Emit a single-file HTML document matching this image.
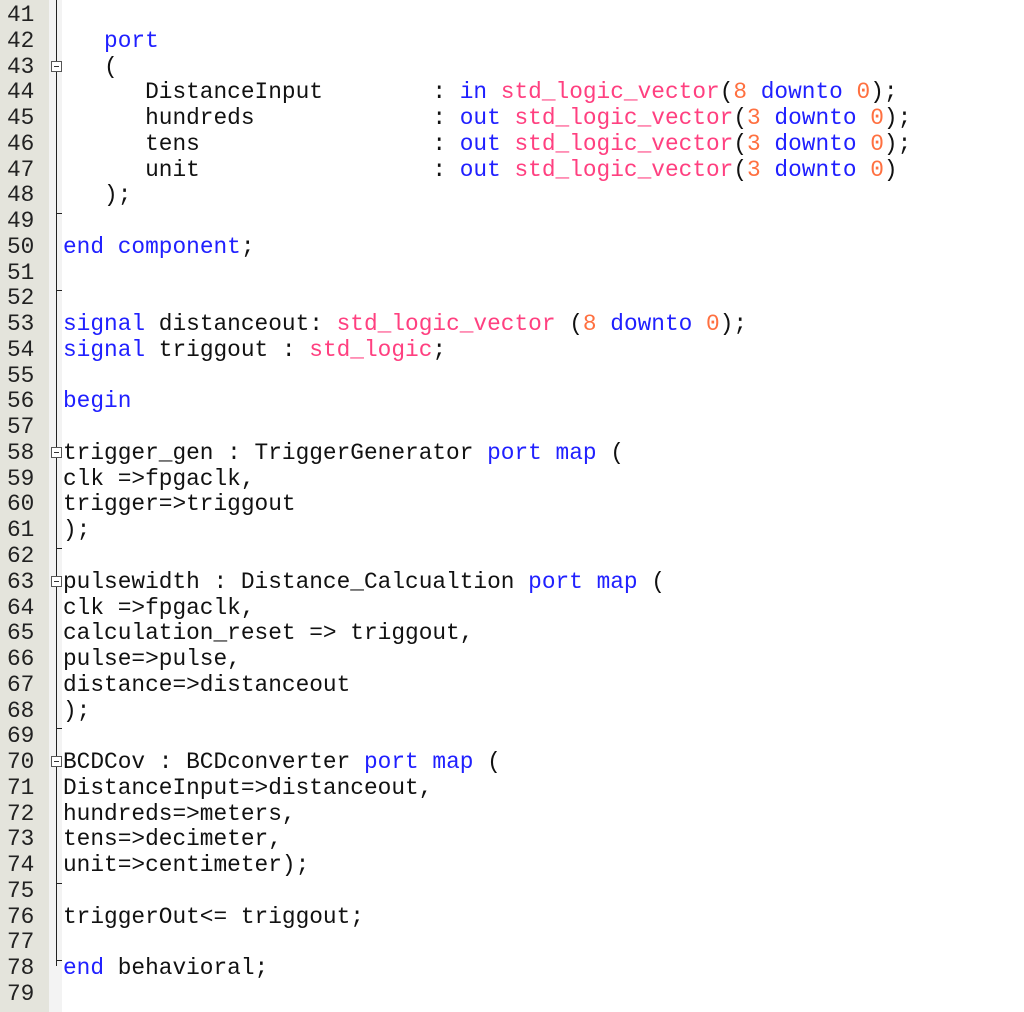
<!DOCTYPE html>
<html><head><meta charset="utf-8"><style>
html,body{margin:0;padding:0;background:#fff;width:1024px;height:1012px;overflow:hidden;position:relative}
.g{position:absolute;left:0;top:0;width:49px;height:1012px;background:#e4e4dc}
.f{position:absolute;left:49px;top:0;width:13px;height:1012px;background:#f3f3f3}
.vl{position:absolute;left:56px;top:0;width:1px;height:966px;background:#222}
.tk{position:absolute;left:56px;width:6px;height:1px;background:#222}
.bx{position:absolute;left:51px;width:11px;height:11px;border:1px solid #555;background:#fff;box-sizing:border-box}
.bx:after{content:"";position:absolute;left:2px;top:4px;width:5px;height:1px;background:#333}
.n,.c{position:absolute;font-family:"Liberation Mono","Courier New",monospace;font-size:22.8px;line-height:25.76px;white-space:pre;color:#111}
.n{left:7px;color:#222}
.c{left:63px}
.k{color:#2020ff}.t{color:#ff4080}.d{color:#ff7040}
</style></head><body>
<div class="g"></div><div class="f"></div><div class="vl"></div>
<div id="w"></div>
<script>
var L=[
"",
"   <span class=k>port</span>",
"   (",
"      DistanceInput        : <span class=k>in</span> <span class=t>std_logic_vector</span>(<span class=d>8</span> <span class=k>downto</span> <span class=d>0</span>);",
"      hundreds             : <span class=k>out</span> <span class=t>std_logic_vector</span>(<span class=d>3</span> <span class=k>downto</span> <span class=d>0</span>);",
"      tens                 : <span class=k>out</span> <span class=t>std_logic_vector</span>(<span class=d>3</span> <span class=k>downto</span> <span class=d>0</span>);",
"      unit                 : <span class=k>out</span> <span class=t>std_logic_vector</span>(<span class=d>3</span> <span class=k>downto</span> <span class=d>0</span>)",
"   );",
"",
"<span class=k>end</span> <span class=k>component</span>;",
"",
"",
"<span class=k>signal</span> distanceout: <span class=t>std_logic_vector</span> (<span class=d>8</span> <span class=k>downto</span> <span class=d>0</span>);",
"<span class=k>signal</span> triggout : <span class=t>std_logic</span>;",
"",
"<span class=k>begin</span>",
"",
"trigger_gen : TriggerGenerator <span class=k>port</span> <span class=k>map</span> (",
"clk =>fpgaclk,",
"trigger=>triggout",
");",
"",
"pulsewidth : Distance_Calcualtion <span class=k>port</span> <span class=k>map</span> (",
"clk =>fpgaclk,",
"calculation_reset => triggout,",
"pulse=>pulse,",
"distance=>distanceout",
");",
"",
"BCDCov : BCDconverter <span class=k>port</span> <span class=k>map</span> (",
"DistanceInput=>distanceout,",
"hundreds=>meters,",
"tens=>decimeter,",
"unit=>centimeter);",
"",
"triggerOut<= triggout;",
"",
"<span class=k>end</span> behavioral;",
""];
var h="",lh=25.763;
for(var i=0;i<L.length;i++){var t=3+i*lh;
h+='<div class="n" style="top:'+t+'px">'+(41+i)+'</div><div class="c" style="top:'+t+'px">'+L[i]+'</div>';}
[43,58,63,70].forEach(function(n){var t=1+(n-41)*lh+8;h+='<div class="bx" style="top:'+t+'px"></div>';});
[49,52,62,69,75,78].forEach(function(n){var t=1+(n-41)*lh+6;h+='<div class="tk" style="top:'+t+'px"></div>';});
document.getElementById("w").innerHTML=h;
</script>
</body></html>
